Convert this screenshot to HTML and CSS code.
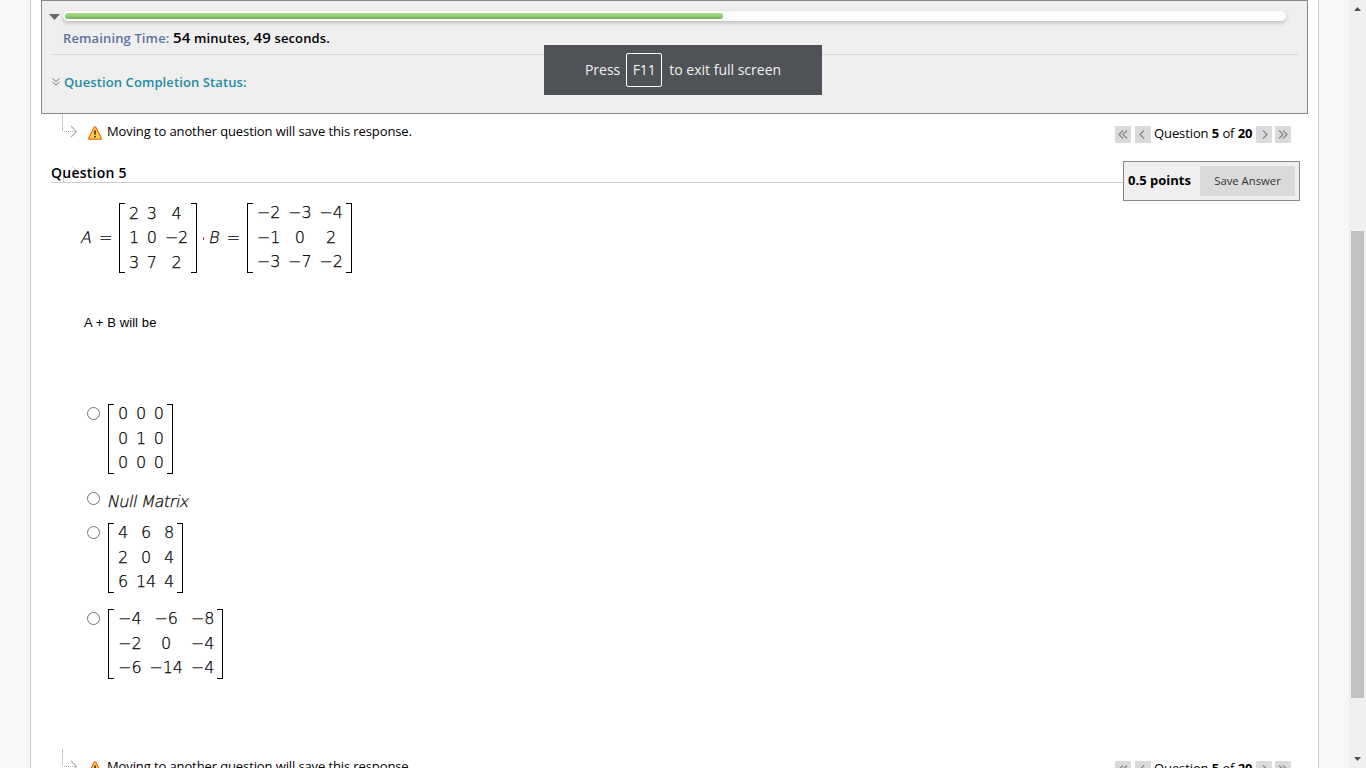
FILE: index.html
```
<!DOCTYPE html>
<html lang="en">

<head>
    <meta charset="UTF-8">
    <title>Take Test</title>
    <link rel="stylesheet" href="styles.css">
</head>

<body>
    <!-- shared icons -->
    <svg class="defs">
        <symbol id="warn" viewBox="0 0 14 14">
            <path d="M6.2 1.2 Q7 .2 7.8 1.2 L13.3 12 Q13.6 13.3 12.5 13.3 H1.5 Q.4 13.3 .7 12 Z" fill="#ffd23c" stroke="#ee5a1e" stroke-width="1.1" stroke-linejoin="round" />
            <path d="M6.2 4.5h1.7l-.3 4.5h-1.1zM6.2 10h1.6v1.5H6.2z" fill="#222" />
        </symbol>
        <symbol id="path" viewBox="0 0 16 24">
            <path d="M.5 0V17" stroke="#b5b5b5" stroke-dasharray="1.5 .5" fill="none" />
            <path d="M2 17.5H14" stroke="#a8a8a8" stroke-dasharray="1 1" fill="none" />
            <path d="M9 12 L14.5 17.5 L9 23" stroke="#b5b5b5" stroke-width="1.2" fill="none" />
        </symbol>
        <symbol id="one" viewBox="0 0 16 17">
            <path d="M9 4.5 L5 8.5 L9 12.5" />
        </symbol>
        <symbol id="two" viewBox="0 0 16 17">
            <path d="M8 4.5 L4 8.5 L8 12.5 M12 4.5 L8 8.5 L12 12.5" />
        </symbol>
    </svg>

    <div class="page">
        <div class="status">
            <div class="timer">
                <svg class="toggle" width="11" height="6"><path d="M0 0H11L5.5 6Z" fill="#666" /></svg>
                <div class="track"><div class="fill"></div></div>
            </div>
            <div class="remaining">Remaining Time: <b><big>54</big> minutes, <big>49</big> seconds.</b></div>
            <div class="completion">
                <svg width="8" height="8" fill="none" stroke="#777"><path d="M.5 .5L4 3.5L7.5 .5M.5 4L4 7L7.5 4" /></svg>
                <span>Question Completion Status:</span>
            </div>
        </div>

        <div class="step">
            <svg class="trail"><use href="#path" /></svg>
            <svg class="warn"><use href="#warn" /></svg>
            <span class="msg">Moving to another question will save this response.</span>
            <div class="pager">
                <svg class="btn"><use href="#two" /></svg>
                <svg class="btn"><use href="#one" /></svg>
                <span>Question <b>5</b> of <b>20</b></span>
                <svg class="btn flip"><use href="#one" /></svg>
                <svg class="btn flip"><use href="#two" /></svg>
            </div>
        </div>

        <div class="head">
            <h3>
                <svg class="ghost" width="16" height="16" fill="none" stroke="#ccc"><path d="M.5 10V16M9 0L14.5 5.5L9 11" /></svg>
                <span>Question 5</span>
            </h3>
            <div class="points"><b>0.5 points</b><button>Save Answer</button></div>
        </div>

        <div class="formula">
            <i>A</i><span class="eq">=</span>
            <div class="matrix low">
                <span>2</span><span>3</span><span>4</span>
                <span>1</span><span>0</span><span>−2</span>
                <span>3</span><span>7</span><span>2</span>
            </div>
            <span class="comma"></span>
            <i>B</i><span class="eq">=</span>
            <div class="matrix">
                <span>−2</span><span>−3</span><span>−4</span>
                <span>−1</span><span>0</span><span>2</span>
                <span>−3</span><span>−7</span><span>−2</span>
            </div>
        </div>
        <p class="ask">A + B will be</p>

        <div class="answers">
            <label class="answer">
                <span class="radio"></span>
                <div class="matrix">
                    <span>0</span><span>0</span><span>0</span>
                    <span>0</span><span>1</span><span>0</span>
                    <span>0</span><span>0</span><span>0</span>
                </div>
            </label>
            <label class="answer text">
                <span class="radio"></span>
                <i>Null Matrix</i>
            </label>
            <label class="answer">
                <span class="radio"></span>
                <div class="matrix">
                    <span>4</span><span>6</span><span>8</span>
                    <span>2</span><span>0</span><span>4</span>
                    <span>6</span><span>14</span><span>4</span>
                </div>
            </label>
            <label class="answer">
                <span class="radio"></span>
                <div class="matrix">
                    <span>−4</span><span>−6</span><span>−8</span>
                    <span>−2</span><span>0</span><span>−4</span>
                    <span>−6</span><span>−14</span><span>−4</span>
                </div>
            </label>
        </div>

        <div class="step">
            <svg class="trail"><use href="#path" /></svg>
            <svg class="warn"><use href="#warn" /></svg>
            <span class="msg">Moving to another question will save this response.</span>
            <div class="pager">
                <svg class="btn"><use href="#two" /></svg>
                <svg class="btn"><use href="#one" /></svg>
                <span>Question <b>5</b> of <b>20</b></span>
                <svg class="btn flip"><use href="#one" /></svg>
                <svg class="btn flip"><use href="#two" /></svg>
            </div>
        </div>
    </div>

    <div class="scrollbar">
        <svg width="7" height="4"><path d="M3.5 0L7 4H0Z" fill="#505050" /></svg>
        <div class="thumb"></div>
        <svg width="7" height="4"><path d="M0 0H7L3.5 4Z" fill="#505050" /></svg>
    </div>

    <!-- full screen hint, lies over the page -->
    <div class="toast">Press <kbd>F11</kbd> to exit full screen</div>
</body>

</html>
```
FILE: styles.css
```
* {
    box-sizing: border-box;
}

body {
    margin: 0;
    height: 768px;
    overflow: hidden;
    display: flex;
    background: #f7f7f7;
    color: #000;
    font: 13px/18px "Open Sans", sans-serif;
}

svg {
    display: block;
    flex: none;
}

.defs {
    position: absolute;
    width: 0;
    height: 0;
}

.page {
    width: 1289px;
    height: 768px;
    margin-left: 30px;
    padding: 0 10px;
    overflow: hidden;
    background: #fff;
    border: solid #ccc;
    border-width: 0 1px;
}

/* timer and completion status */
.status {
    width: 1267px;
    height: 114px;
    padding: 10px 9px 0;
    border: 1px solid #888;
    background: #efefef;
}

.timer {
    display: flex;
    height: 16px;
}

.toggle {
    margin: 3px 3px 0 -2px;
}

.track {
    width: 1223px;
    height: 10px;
    padding: 2px;
    border-radius: 5px;
    background: #fdfdfd;
    box-shadow: 0 2px 4px #bbb;
}

.fill {
    width: 658px;
    height: 6px;
    border-radius: 3px;
    background: linear-gradient(#a4dc85, #92cc74 50%, #79ad62);
}

.remaining {
    height: 28px;
    padding-left: 12px;
    line-height: 22px;
    font-weight: 600;
    letter-spacing: .13px;
    color: #5c74a0;
    border-bottom: 1px solid #d9d9d9;
}

.remaining b {
    color: #000;
    font-weight: 600;
}

.remaining big {
    font-size: 15px;
    line-height: 20px;
}

.completion {
    display: flex;
    align-items: center;
    gap: 4px;
    padding: 18px 0 0 1px;
    font-weight: 600;
    letter-spacing: .1px;
    color: #248ba5;
}

/* row with the warning and question navigation */
.step {
    display: flex;
    height: 47px;
}

.trail {
    width: 16px;
    height: 24px;
    margin-left: 21px;
}

.warn {
    width: 14px;
    height: 14px;
    margin: 12px 5px 0 10px;
}

.msg {
    margin-top: 8px;
    letter-spacing: -.11px;
}

.pager {
    display: flex;
    margin: 11px 17px 0 auto;
}

.btn {
    width: 16px;
    height: 17px;
    margin: 1px 4px 0 0;
    border-radius: 1px;
    background: #dadada;
    fill: none;
    stroke: #888;
    stroke-width: 1.3;
}

.btn + span {
    width: 98px;
    margin: -1px 4px 0 -1px;
    letter-spacing: -.1px;
    white-space: nowrap;
}

.flip {
    transform: scaleX(-1);
    margin-right: 3px;
}

.flip:last-child {
    margin-right: 0;
}

.head {
    display: flex;
    height: 40px;
    margin-left: 10px;
}

.head h3 {
    position: relative;
    flex: 1;
    height: 22px;
    margin: 0;
    padding-top: 2px;
    line-height: 20px;
    font-size: 14px;
    font-weight: 600;
    letter-spacing: .25px;
    border-bottom: 1px solid #ccc;
}

.head h3 span {
    position: relative;
}

/* end of the dotted trail, under the title */
.ghost {
    position: absolute;
    left: 12px;
    top: 5px;
}

.points {
    display: flex;
    width: 177px;
    margin-right: 8px;
    padding: 4px;
    border: 1px solid #888;
    background: #efefef;
}

.points b {
    flex: 1;
    line-height: 29px;
}

.points button {
    width: 95px;
    height: 30px;
    padding: 0 0 2px;
    border: 0;
    border-radius: 1px;
    background: #dadada;
    color: #333;
    font: 11.3px "Open Sans", sans-serif;
}

/* formulas */
.formula {
    display: flex;
    align-items: center;
    height: 70px;
    margin: 2px 0 0 40px;
}

.formula,
.matrix,
.text i {
    font: 200 16px/24px "DejaVu Sans", sans-serif;
    color: #000;
    -webkit-text-stroke: .25px #000;
}

/* the light weight has no oblique face, slant the upright one */
.formula i,
.text i {
    font-style: normal;
    transform: skewX(-12deg);
}

.eq {
    width: 14px;
    margin: 0 6px 0 7px;
}

.comma {
    width: 1px;
    height: 3px;
    margin: 0 5px 0 6px;
    background: #c36;
}

.matrix {
    position: relative;
    display: grid;
    grid-template-columns: repeat(3, auto);
    grid-auto-rows: 24.4px;
    gap: 0 7.7px;
    align-content: center;
    height: 70px;
    padding: 0 9px 0 10px;
    text-align: center;
}

.matrix.low {
    padding-top: 1px;
}

/* square brackets at both sides */
.matrix::before,
.matrix::after {
    content: '';
    position: absolute;
    top: 0;
    bottom: 0;
    width: 5px;
    border: 1px solid #000;
}

.matrix::before {
    left: 0;
    border-right: 0;
}

.matrix::after {
    right: 0;
    border-left: 0;
}

.ask {
    margin: 41px 0 0 43px;
    font: 13px/18px "Liberation Sans", sans-serif;
    letter-spacing: .1px;
}

.answers {
    height: 417px;
    padding: 72px 0 0 46px;
}

.answer {
    display: flex;
    height: 70px;
    margin-bottom: 16px;
}

.answer.text {
    height: 24px;
    margin: -1px 0 10px;
}

.radio {
    width: 13px;
    height: 13px;
    margin: 3px 8px 0 0;
    border: 1px solid #767676;
    border-radius: 50%;
}

.text i {
    margin-top: 1px;
    letter-spacing: -.5px;
}

.scrollbar {
    display: flex;
    flex-direction: column;
    justify-content: space-between;
    align-items: center;
    width: 17px;
    height: 768px;
    margin-left: auto;
    padding: 7px 0;
    background: #f0f0f0;
}

.thumb {
    width: 13px;
    height: 467px;
    margin: 170px 0 9px;
    background: #c1c1c1;
}

.toast {
    position: absolute;
    left: 544px;
    top: 45px;
    display: flex;
    justify-content: center;
    align-items: center;
    width: 278px;
    height: 50px;
    padding-bottom: 1px;
    background: rgba(65, 68, 73, .92);
    color: #f1f1f1;
    font: 14px "Open Sans", sans-serif;
}

.toast kbd {
    width: 36px;
    height: 34px;
    margin: 1px 7px 0 6px;
    border: 1px solid #fff;
    border-radius: 2px;
    text-align: center;
    font: 14px/32px "Open Sans", sans-serif;
}
```
